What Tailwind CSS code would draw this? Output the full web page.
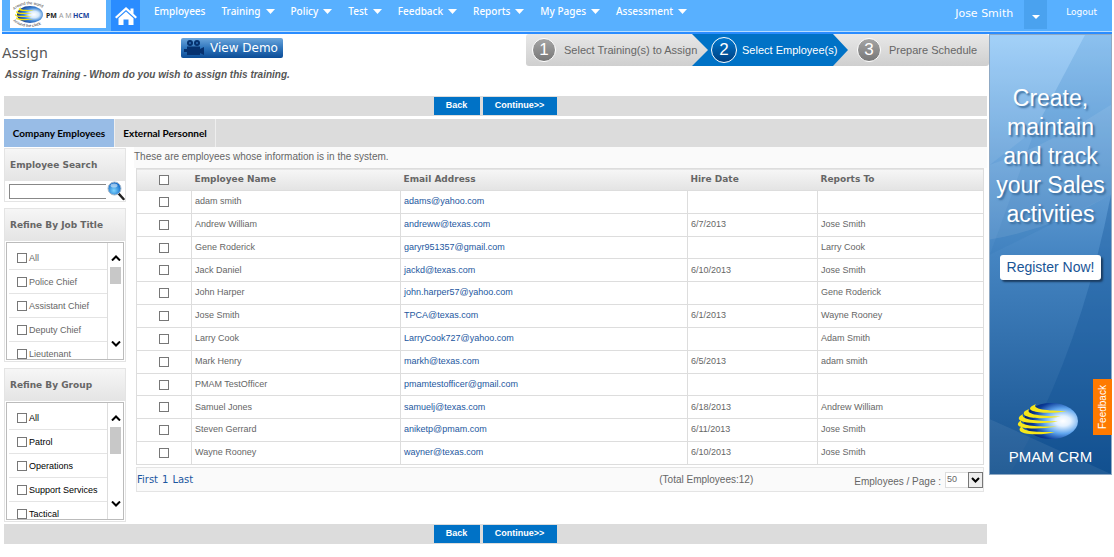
<!DOCTYPE html>
<html lang="en">
<head>
  <meta charset="UTF-8" />
  <meta name="viewport" content="width=device-width, initial-scale=1.0"/>
  <title>PMAM HCM - Assign Training</title>
  <script src="https://cdn.jsdelivr.net/npm/@tailwindcss/browser@4"></script>
</head>
<body class="bg-white px-[2px] font-['Liberation_Sans',sans-serif] text-[10px] text-[#666]">

  <!-- Top bar -->
  <header class="flex h-[34px] items-start border-b-2 border-[#2a8cff] bg-[#58b0ff] font-['Noto_Sans',sans-serif] text-[10px] font-medium text-white shadow-[inset_0_-1px_0_#b5dcff]">
    <a href="#" aria-label="PMAM HCM" class="ml-2 h-7 w-24 bg-white">
      <svg class="h-7 w-24" viewBox="0 0 96 28">
        <defs>
          <radialGradient id="globe" cx="65%" cy="50%" r="65%">
            <stop offset="0" stop-color="#fff"/><stop offset=".3" stop-color="#d5eafc"/><stop offset=".6" stop-color="#3d84d4"/><stop offset="1" stop-color="#0b2f86"/>
          </radialGradient>
          <path id="arcTop" d="M4 10 Q18 -1 35 9"/>
          <path id="arcBottom" d="M3 21 Q17 32 34 23"/>
        </defs>
        <ellipse cx="20" cy="14.500" rx="13" ry="8.500" fill="url(#globe)"/>
        <g fill="#f2e20c">
          <path d="M11 7 C8 10 16 10 24 10 C14 12 4 11 11 7Z"/>
          <path d="M8 10 C5 13 13 13 22 13 C12 15 2 14 8 10Z"/>
          <path d="M6.500 13.500 C4 16 12 16 22 16 C12 18 1 17 6.500 13.500Z"/>
          <path d="M7 17 C6 19 14 19 23 19 C14 21 3 21 7 17Z"/>
        </g>
        <g font-family="Liberation Sans, sans-serif" font-size="4" fill="#333">
          <text><textPath href="#arcTop">Around the world</textPath></text>
          <text><textPath href="#arcBottom">Around the clock</textPath></text>
        </g>
        <g font-family="Noto Sans, sans-serif" font-size="7" font-weight="bold">
          <text x="36" y="18" fill="#222">PM</text>
          <text x="49" y="18" fill="#999" font-weight="400">A M</text>
          <text x="63" y="18" fill="#1a3f9c">HCM</text>
        </g>
      </svg>
    </a>
    <a href="#" aria-label="Home" class="ml-[5px] flex h-[31px] w-[29px] items-center justify-center bg-[#2a8cff]">
      <svg class="h-[18px] w-[22px]" viewBox="0 0 22 18" fill="#fff">
        <path d="M11 0 L15.500 4 V1.500 H18.500 V6.700 L22 10 L20.500 11.500 L11 3 L1.500 11.500 L0 10 Z"/>
        <path d="M11 4.500 L18.500 11.200 V18 H13.500 V12.500 H8.500 V18 H3.500 V11.200 Z"/>
      </svg>
    </a>
    <nav id="menu" class="ml-[14px] flex h-[22px] items-center gap-4"></nav>
    <div class="ml-auto flex items-start">
      <span class="font-['DejaVu_Sans',sans-serif] text-[11px] leading-7">Jose Smith</span>
      <button aria-label="Account menu" class="ml-[11px] flex h-[29px] w-[23px] items-center justify-center bg-[#4aa2ef]">
        <svg class="mt-1 h-1 w-2" viewBox="0 0 8 4" fill="#fff"><path d="M0 0H8L4 4Z"/></svg>
      </button>
      <a href="#" class="mr-[15px] ml-[19px] font-['DejaVu_Sans',sans-serif] text-[9px] leading-6">Logout</a>
    </div>
  </header>

  <div class="flex items-start">
    <main class="min-w-0 flex-1">

      <!-- Title and wizard steps -->
      <div class="flex h-[62px] items-start">
        <div class="flex-1">
          <div class="flex items-start">
            <h1 class="mt-[9px] w-[179px] font-['DejaVu_Sans',sans-serif] text-[14px] leading-5 text-[#555]">Assign</h1>
            <button class="mt-1 flex h-5 w-[102px] items-center gap-[6px] rounded-[2px] bg-linear-to-b from-[#6ba6dc] via-[#2f76bd] to-[#0b4c96] pl-[3px] font-['DejaVu_Sans',sans-serif] text-[12px] text-white">
              <svg class="h-4 w-5" viewBox="0 0 20 16" fill="#06316f">
                <circle cx="6" cy="3" r="3"/><circle cx="13" cy="3" r="3"/>
                <path d="M3 6.500H16V9L20 7V15L16 13V15H3V12H0V9H3Z"/>
                <circle cx="6" cy="3" r="1" fill="#2d6db5"/><circle cx="13" cy="3" r="1" fill="#2d6db5"/>
              </svg>
              View Demo
            </button>
          </div>
          <p class="mt-[6px] ml-[3px] text-[10px] leading-3 font-bold text-[#555] italic">Assign Training - Whom do you wish to assign this training.</p>
        </div>
        <ol class="flex h-8 text-[11px]">
          <li class="z-20 flex w-[182px] items-center gap-2 rounded-l-[3px] bg-linear-to-b from-[#e8e8e8] to-[#cfcfcf] pl-[6px] [clip-path:polygon(0_0,166px_0,100%_50%,166px_100%,0_100%)]">
            <span class="flex size-6 items-center justify-center rounded-full border border-white bg-linear-to-b from-[#a5a5a5] to-[#777] text-[17px] text-white">1</span>
            Select Training(s) to Assign
          </li>
          <li class="z-10 -ml-4 flex w-[156px] items-center gap-[5px] bg-[#0072c6] pl-[19px] text-white [clip-path:polygon(0_0,141px_0,100%_50%,141px_100%,0_100%)]">
            <span class="flex size-[26px] items-center justify-center rounded-full border border-white bg-linear-to-b from-[#0078d0] to-[#003f80] text-[17px]">2</span>
            Select Employee(s)
          </li>
          <li class="-ml-4 flex w-[157px] items-center gap-2 rounded-r-[3px] bg-linear-to-b from-[#e8e8e8] to-[#cfcfcf] pl-[25px]">
            <span class="flex size-6 items-center justify-center rounded-full border border-white bg-linear-to-b from-[#a5a5a5] to-[#777] text-[17px] text-white">3</span>
            Prepare Schedule
          </li>
        </ol>
      </div>

      <div class="mr-[2px] ml-[2px]">
        <div class="flex h-5 items-center justify-center gap-[3px] bg-[#dcdcdc] pr-[1px] text-[9px] font-bold text-white">
          <button class="h-[18px] w-[46px] bg-[#0072c6]">Back</button>
          <button class="h-[18px] w-[74px] bg-[#0072c6]">Continue&gt;&gt;</button>
        </div>

        <div class="mt-[3px] flex h-7 bg-[#dcdcdc] font-['Lato',sans-serif] text-[10px] font-bold text-black">
          <button class="w-[110px] bg-[#98bce6]">Company Employees</button>
          <button class="w-[102px] border-x border-[#eee]">External Personnel</button>
        </div>

        <div class="flex items-start gap-2">
          <!-- Filters -->
          <aside class="flex w-[122px] flex-col gap-[6px] pt-[1px]">
            <section class="border border-[#e4e4e4]">
              <h2 class="h-8 bg-linear-to-b from-[#f6f6f6] to-[#e4e4e4] pl-[5px] font-['DejaVu_Sans',sans-serif] text-[9px] leading-8 font-bold"><label for="search">Employee Search</label></h2>
              <div class="flex h-5 items-center pl-1">
                <input id="search" type="text" class="h-[15px] w-[97px] border border-r-0 border-[#888] px-1 outline-none" />
                <button aria-label="Search" class="ml-[1px]">
                  <svg class="h-5 w-[18px]" viewBox="0 0 18 20">
                    <defs><radialGradient id="lens" cx="45%" cy="65%" r="60%"><stop offset="0" stop-color="#7fd6ff"/><stop offset="1" stop-color="#0f68c8"/></radialGradient></defs>
                    <path d="M12 13 L16.500 18" stroke="#222" stroke-width="2.500" stroke-linecap="round"/>
                    <circle cx="7.500" cy="7.500" r="6.500" fill="url(#lens)" stroke="#a5b8ca" stroke-width="1"/>
                    <ellipse cx="7" cy="4.500" rx="3.500" ry="2" fill="#fff" opacity=".5"/>
                  </svg>
                </button>
              </div>
            </section>
            <section class="border border-[#e4e4e4]">
              <h2 class="h-8 bg-linear-to-b from-[#f6f6f6] to-[#e4e4e4] pl-[5px] font-['DejaVu_Sans',sans-serif] text-[9px] leading-8 font-bold">Refine By Job Title</h2>
              <div id="jobTitles" class="m-[1px] flex h-[118px] overflow-hidden border border-[#bbb] text-[9px]"></div>
            </section>
            <section class="border border-[#e4e4e4]">
              <h2 class="h-8 bg-linear-to-b from-[#f6f6f6] to-[#e4e4e4] pl-[5px] font-['DejaVu_Sans',sans-serif] text-[9px] leading-8 font-bold">Refine By Group</h2>
              <div id="groups" class="m-[1px] flex h-[118px] overflow-hidden border border-[#bbb] text-[9px] text-black"></div>
            </section>
          </aside>

          <!-- Employee list -->
          <section class="min-w-0 flex-1">
            <p class="h-[21px] bg-[#fafafa] leading-5">These are employees whose information is in the system.</p>
            <div class="mr-[3px] ml-[2px]">
              <table class="h-[297px] w-full table-fixed border-collapse text-left text-[9px]">
                <thead>
                  <tr class="h-[22px] border border-[#ddd] bg-linear-to-b from-[#f6f6f6] to-[#e4e4e4] font-['DejaVu_Sans',sans-serif]">
                    <th class="w-[55px] text-center"><input type="checkbox" aria-label="Select all" class="mx-auto block size-[10px] appearance-none border border-[#777] bg-white" /></th>
                    <th class="w-[209px] pl-[3px]">Employee Name</th>
                    <th class="pl-[3px]">Email Address</th>
                    <th class="w-[130px] pl-[3px]">Hire Date</th>
                    <th class="w-[166px] pl-[3px]">Reports To</th>
                  </tr>
                </thead>
                <tbody id="employees"></tbody>
              </table>
              <div class="mt-[2px] flex h-[25px] items-center border border-[#e4e4e4] bg-[#fafafa]">
                <div class="flex flex-1 gap-1 font-['DejaVu_Sans',sans-serif] text-[10px] text-[#1c57a0]">
                  <a href="#">First</a><a href="#">1</a><a href="#">Last</a>
                </div>
                <span class="w-[195px]">(Total Employees:12)</span>
                <label for="pageSize" class="mt-1">Employees / Page :</label>
                <span class="relative ml-1 flex">
                  <select id="pageSize" class="h-4 w-[38px] appearance-none border border-[#ddd] bg-white pl-[1px] text-[9px]"><option>50</option></select>
                  <svg class="pointer-events-none absolute top-0 right-0 h-4 w-[15px]" viewBox="0 0 15 16"><rect x=".5" y=".5" width="14" height="15" fill="#eee" stroke="#777"/><path d="M4 6L7.500 9.500L11 6" fill="none" stroke="#000" stroke-width="2"/></svg>
                </span>
              </div>
            </div>
          </section>
        </div>

        <div class="mt-[2px] flex h-5 items-center justify-center gap-[3px] bg-[#dcdcdc] pr-[1px] text-[9px] font-bold text-white">
          <button class="h-[18px] w-[46px] bg-[#0072c6]">Back</button>
          <button class="h-[18px] w-[74px] bg-[#0072c6]">Continue&gt;&gt;</button>
        </div>
      </div>
    </main>

    <!-- Promo banner -->
    <aside class="relative flex w-[123px] flex-col items-center border border-[#8fa9c4] bg-linear-to-b from-[#9bcdf8] via-[#4585c2] to-[#15528f] pt-[49px] pb-[7px] text-white">
      <svg class="absolute inset-0 h-full w-full" viewBox="0 0 121 440" preserveAspectRatio="none">
        <path d="M95 0L45 95L0 130V0Z" fill="#fff" opacity=".08"/>
        <path d="M121 0H95L45 95L0 220L121 160Z" fill="#1d68b0" opacity=".12"/>
        <path d="M0 130Q60 110 121 70V160Q60 195 0 205Z" fill="#fff" opacity=".08"/>
        <path d="M121 160V440H20Q90 320 121 160Z" fill="#0b4c93" opacity=".3"/>
        <path d="M0 385L121 440H0Z" fill="#fff" opacity=".07"/>
      </svg>
      <p class="relative text-center text-[23px] leading-[29px] text-shadow-[2px_2px_2px_#3a6c9c]">Create,<br />maintain<br />and track<br />your Sales<br />activities</p>
      <button class="relative mt-[26px] h-[25px] w-[101px] rounded-[3px] bg-white text-[14px] text-[#1a5596] shadow-[2px_2px_2px_#1b3c60]">Register Now!</button>
      <svg class="relative mt-[121px] mr-[6px] h-10 w-[62px]" viewBox="0 0 62 40">
        <defs>
          <radialGradient id="crm" cx="72%" cy="50%" r="70%">
            <stop offset="0" stop-color="#fff"/><stop offset=".2" stop-color="#e4f2ff"/><stop offset=".5" stop-color="#5fa5ee"/><stop offset=".8" stop-color="#0a3a96"/><stop offset="1" stop-color="#04206c"/>
          </radialGradient>
        </defs>
        <ellipse cx="34" cy="20" rx="27" ry="18" fill="url(#crm)"/>
        <g fill="#f6e71a">
          <path d="M19 3 C14 8 30 10 50 10 C30 14 6 11 15 5Z"/>
          <path d="M12 8 C8 14 26 15 44 15.500 C24 19 1 17 8 10Z"/>
          <path d="M6 13 C3 19 20 20 41 20.500 C20 24 -4 22 3 15Z"/>
          <path d="M4 19 C2 25 20 25.500 40 25.500 C20 29 -5 28 2 21Z"/>
          <path d="M5 25 C5 31 20 31 38 31 C24 35 -1 34 3 27Z"/>
        </g>
      </svg>
      <span class="relative mt-[6px] text-[15px] leading-5">PMAM CRM</span>
      <button class="absolute top-[344px] -right-px h-14 w-[19px] rotate-180 bg-[#ff7a00] text-[10px] [writing-mode:vertical-rl]">Feedback</button>
    </aside>
  </div>

  <script>
    const menu = ["Employees", "Training", "Policy", "Test", "Feedback", "Reports", "My Pages", "Assessment"];
    const caret = `<svg class="h-[5px] w-[9px]" viewBox="0 0 9 5" fill="#fff"><path d="M0 0H9L4.500 5Z"/></svg>`;
    document.getElementById("menu").innerHTML = menu.map((m, i) =>
      `<a href="#" class="flex items-center gap-[5px] whitespace-nowrap">${m}${i ? caret : ""}</a>`
    ).join("");

    function fillList(id, items, thumb) {
      const rows = items.map(t => `
        <label class="flex h-6 shrink-0 items-center gap-[2px] border-b border-[#e4e4e4] pl-2 whitespace-nowrap">
          <input type="checkbox" class="size-[10px] shrink-0 appearance-none border border-[#777] bg-white" />
          <span class="pt-[2px]">${t}</span>
        </label>`).join("");
      document.getElementById(id).innerHTML = `
        <div class="ml-[2px] flex w-[99px] flex-col border-r border-[#ddd] pt-[3px]">${rows}</div>
        <div class="flex flex-1 flex-col items-center pt-3">
          <button aria-label="Scroll up"><svg class="block h-[6px] w-[10px]" viewBox="0 0 10 6" fill="none" stroke="#000" stroke-width="2"><path d="M1 5.500L5 1.500L9 5.500"/></svg></button>
          <div class="mt-[6px] w-[11px] bg-[#c8c8c8]" style="height:${thumb}px"></div>
          <button aria-label="Scroll down" class="mt-auto mb-3"><svg class="block h-[6px] w-[10px]" viewBox="0 0 10 6" fill="none" stroke="#000" stroke-width="2"><path d="M1 .5L5 4.500L9 .5"/></svg></button>
        </div>`;
    }
    fillList("jobTitles", ["All", "Police Chief", "Assistant Chief", "Deputy Chief", "Lieutenant"], 17);
    fillList("groups", ["All", "Patrol", "Operations", "Support Services", "Tactical"], 27);

    const employees = [
      ["adam smith", "adams@yahoo.com", "", ""],
      ["Andrew William", "andreww@texas.com", "6/7/2013", "Jose Smith"],
      ["Gene Roderick", "garyr951357@gmail.com", "", "Larry Cook"],
      ["Jack Daniel", "jackd@texas.com", "6/10/2013", "Jose Smith"],
      ["John Harper", "john.harper57@yahoo.com", "", "Gene Roderick"],
      ["Jose Smith", "TPCA@texas.com", "6/1/2013", "Wayne Rooney"],
      ["Larry Cook", "LarryCook727@yahoo.com", "", "Adam Smith"],
      ["Mark Henry", "markh@texas.com", "6/5/2013", "adam smith"],
      ["PMAM TestOfficer", "pmamtestofficer@gmail.com", "", ""],
      ["Samuel Jones", "samuelj@texas.com", "6/18/2013", "Andrew William"],
      ["Steven Gerrard", "aniketp@pmam.com", "6/11/2013", "Jose Smith"],
      ["Wayne Rooney", "wayner@texas.com", "6/10/2013", "Jose Smith"]
    ];
    document.getElementById("employees").innerHTML = employees.map(([name, email, hired, boss]) => `
      <tr>
        <td class="border border-[#ddd]"><input type="checkbox" aria-label="${name}" class="mx-auto block size-[10px] appearance-none border border-[#777] bg-white" /></td>
        <td class="border border-[#ddd] pl-[3px]">${name}</td>
        <td class="border border-[#ddd] pl-[3px]"><a href="#" class="text-[#1c57a0]">${email}</a></td>
        <td class="border border-[#ddd] pl-[3px]">${hired}</td>
        <td class="border border-[#ddd] pl-[3px]">${boss}</td>
      </tr>`).join("");
  </script>
</body>
</html>
